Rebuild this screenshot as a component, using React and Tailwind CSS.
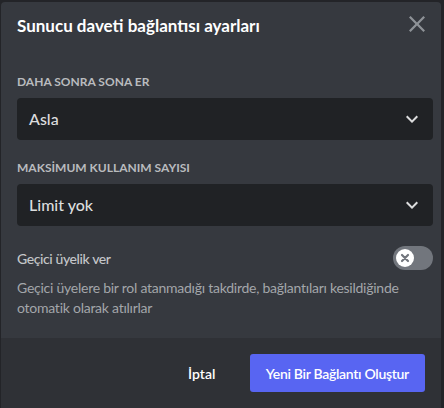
import React, { useState } from 'react';

const font = { fontFamily: 'Lato, "Noto Sans", "Liberation Sans", sans-serif' };

function Chevron() {
  return (
    <svg width="24" height="24" viewBox="0 0 24 24" className="shrink-0 text-[#dcddde]">
      <path fill="currentColor" d="M16.59 8.59003L12 13.17L7.41 8.59003L6 10L12 16L18 10L16.59 8.59003Z" />
    </svg>
  );
}

function Select({ value }) {
  return (
    <button className="flex h-[42px] w-full items-center justify-between rounded-[4px] bg-[#202225] pl-3 pr-[9px] text-left">
      <span className="text-[16px] font-medium text-[#dcddde]">{value}</span>
      <Chevron />
    </button>
  );
}

function Toggle({ on, onChange }) {
  return (
    <button
      onClick={() => onChange(!on)}
      className="flex h-6 w-10 shrink-0 items-center rounded-full bg-[#72767d] px-[3px]"
    >
      <span className="flex h-[18px] w-[18px] items-center justify-center rounded-full bg-white">
        <svg width="10" height="10" viewBox="0 0 10 10">
          <path d="M2 2L8 8M8 2L2 8" stroke="#72767d" strokeWidth="2.2" strokeLinecap="round" />
        </svg>
      </span>
    </button>
  );
}

export default function App() {
  const [temp, setTemp] = useState(false);

  return (
    <div className="h-[408px] w-[444px] overflow-hidden bg-[#232428] pl-px pt-[2px]" style={font}>
      <div className="flex h-[406px] w-[440px] flex-col rounded-t-[4px] bg-[#36393f]">
        <div className="flex items-start justify-between pl-4 pr-3 pt-[10px]">
          <h2 className="pt-[2px] text-[17px] font-bold leading-6 text-white">Sunucu daveti bağlantısı ayarları</h2>
          <button className="text-[#8e9297]">
            <svg width="24" height="24" viewBox="0 0 24 24">
              <path fill="currentColor" d="M18.4 4L12 10.4L5.6 4L4 5.6L10.4 12L4 18.4L5.6 20L12 13.6L18.4 20L20 18.4L13.6 12L20 5.6L18.4 4Z" />
            </svg>
          </button>
        </div>

        <div className="flex-1 pb-5 pl-4 pr-2 pt-[36px]">
          <div className="mb-2 text-[12px] font-bold uppercase leading-4 text-[#b9bbbe]">Daha sonra sona er</div>
          <Select value="Asla" />

          <div className="mb-2 mt-5 text-[12px] font-bold leading-4 text-[#b9bbbe]">MAKSİMUM KULLANIM SAYISI</div>
          <Select value="Limit yok" />

          <div className="mt-5 flex h-6 items-center justify-between">
            <span className="text-[14px] font-medium tracking-[-0.4px] text-[#c4c6c9]">Geçici üyelik ver</span>
            <Toggle on={temp} onChange={setTemp} />
          </div>
          <p className="mt-2 text-[14px] leading-5 tracking-[-0.25px] text-[#a3a6aa]">
            Geçici üyelere bir rol atanmadığı takdirde, bağlantıları kesildiğinde otomatik olarak atılırlar
          </p>
        </div>

        <div className="flex items-center justify-end bg-[#2f3136] p-4">
          <button className="h-[38px] w-24 text-[14px] font-semibold text-white">İptal</button>
          <button className="h-[38px] rounded-[3px] bg-[#5865f2] px-4 text-[14px] font-semibold tracking-[-0.3px] text-white">
            Yeni Bir Bağlantı Oluştur
          </button>
        </div>
      </div>
    </div>
  );
}
